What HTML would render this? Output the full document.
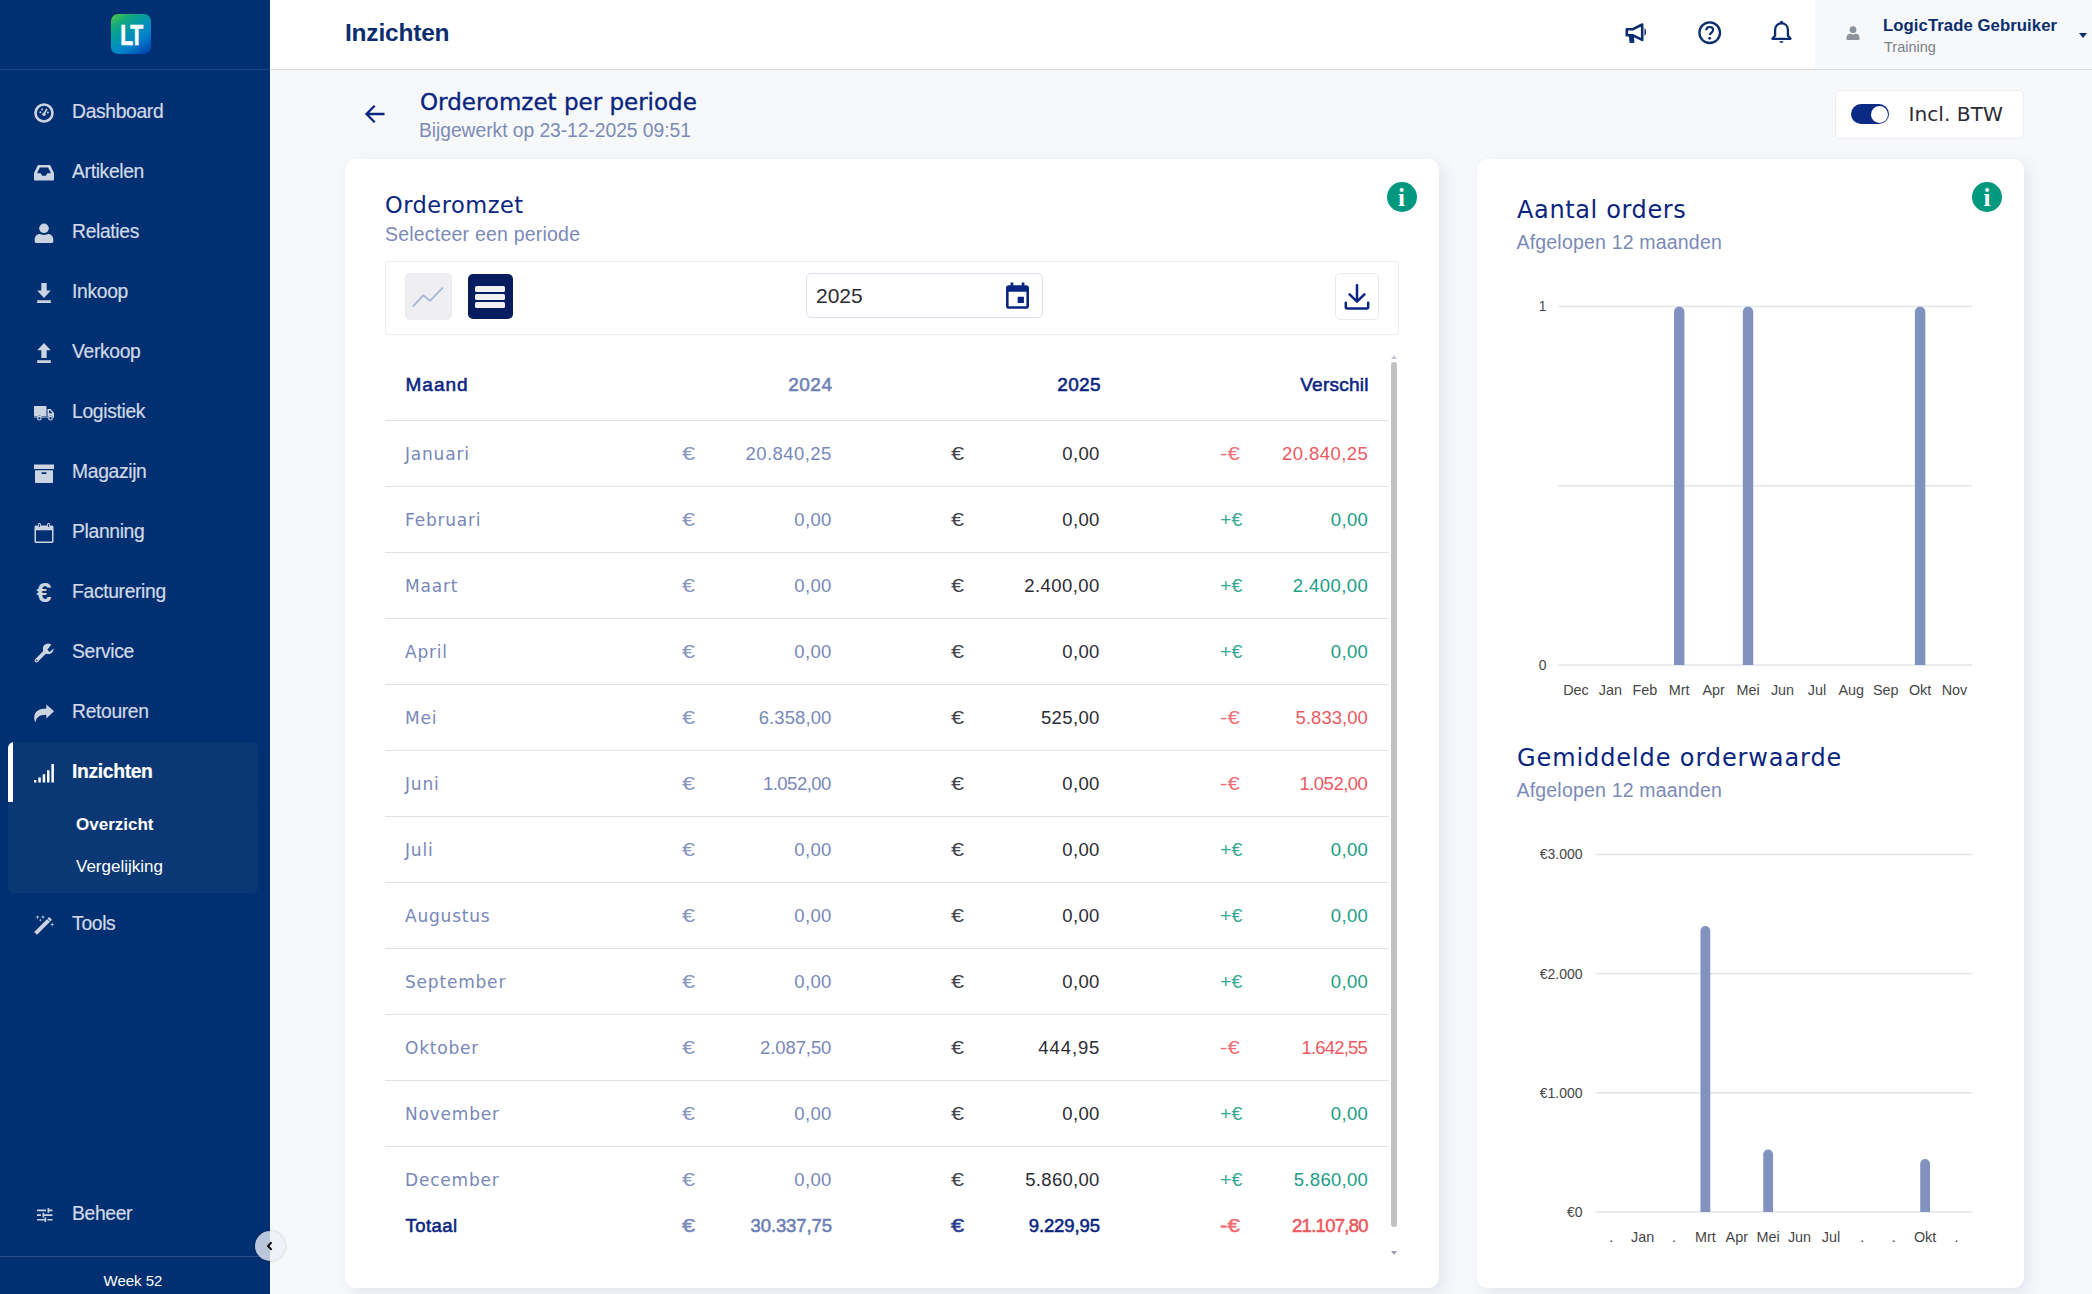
<!DOCTYPE html>
<html lang="nl">
<head>
<meta charset="utf-8">
<title>Inzichten - Orderomzet per periode</title>
<style>
*{box-sizing:border-box;margin:0;padding:0}
html,body{width:2092px;height:1294px;overflow:hidden}
body{position:relative;background:#f7f8fa;font-family:"Liberation Sans",sans-serif;color:#0a2580}
.abs{position:absolute}
.t{position:absolute;white-space:nowrap;line-height:1}
/* ---------- sidebar ---------- */
#side{position:absolute;left:0;top:0;width:270px;height:1294px;background:#003072}
#side .logo{position:absolute;left:111px;top:14px;width:40px;height:40px;border-radius:7px;background:linear-gradient(145deg,#58c640 0%,#12a97c 22%,#0093b6 48%,#0080cc 68%,#0038a4 100%);}
#side .logo span{position:absolute;left:0;top:3px;width:40px;text-align:center;font-weight:bold;font-size:30px;line-height:35px;color:#fff;letter-spacing:-2px;transform:scaleX(.7);-webkit-text-stroke:.7px #fff}
#side .hl{position:absolute;left:0;top:69px;width:270px;height:1px;background:#1c4581}
#side .fl{position:absolute;left:0;top:1256px;width:270px;height:1px;background:#2a4f88}
.nav{-webkit-text-stroke:.2px currentColor;position:absolute;left:72.100px;font-size:19.3px;line-height:22px;height:22px;color:#d3d9e6;white-space:nowrap;letter-spacing:-.35px;margin-top:1px}
.nav.on{color:#fff;font-weight:bold}
.sub{position:absolute;left:76px;font-size:17px;line-height:20px;color:#fff;white-space:nowrap}
.ico{position:absolute;left:32px;width:24px;height:24px}
.ico svg{display:block;width:24px;height:24px}
#actbox{position:absolute;left:8px;top:742px;width:250px;height:151px;border-radius:6px;background:#0b3875;overflow:hidden}
#actbox .bar{position:absolute;left:0;top:0;width:5px;height:60px;background:#fff}
#actbox .div{position:absolute;left:0;top:60px;width:250px;height:1px;background:#0a3470}
#collapse{position:absolute;left:255px;top:1231px;width:30px;height:30px;border-radius:15px;background:rgba(236,240,247,.78);box-shadow:0 0 3px rgba(0,0,0,.25)}
/* ---------- header ---------- */
#head{position:absolute;left:270px;top:0;width:1822px;height:69px;background:#fff}
#headline{position:absolute;left:270px;top:69px;width:1822px;height:1px;background:#dbdbdc}
#user{position:absolute;left:1815px;top:0;width:277px;height:69px;background:#f7f8fa}
/* ---------- cards ---------- */
.card{position:absolute;background:#fff;border-radius:11px;box-shadow:5px 5px 14px rgba(60,80,150,.10)}
.mont{font-family:"DejaVu Sans","Liberation Sans",sans-serif}
.th{font-family:"Liberation Sans",sans-serif!important;font-size:19px;line-height:24px;font-weight:normal;-webkit-text-stroke:.55px currentColor;letter-spacing:.7px}
.td{font-size:18.500px;line-height:22px}
.td.n{letter-spacing:.4px;margin-right:.2px}
.td.e{transform-origin:0 50%;transform:scaleX(1.27);opacity:.88}
.td.e.sg{transform:scaleX(1.06)}
.td.e.sg.mn{transform:scaleX(1.2)}
.td.n.tot{letter-spacing:-.1px;margin-right:.1px}
.td.m{font-family:"DejaVu Sans","Liberation Sans",sans-serif;font-size:17px;letter-spacing:.8px}
.td.tot{font-weight:normal;-webkit-text-stroke:.55px currentColor}
.td.m.tot{font-family:"Liberation Sans",sans-serif;font-size:18.500px;letter-spacing:.45px;margin-left:.5px}
</style>
</head>
<body>
<div id="side">
<div class="logo"><span>LT</span></div>
<div class="hl"></div>
<div id="actbox"><div class="bar"></div><div class="div"></div></div>
<div class="nav" id="n0" style="top:100px">Dashboard</div>
<div class="nav" id="n1" style="top:160px">Artikelen</div>
<div class="nav" id="n2" style="top:220px">Relaties</div>
<div class="nav" id="n3" style="top:280px">Inkoop</div>
<div class="nav" id="n4" style="top:340px">Verkoop</div>
<div class="nav" id="n5" style="top:400px">Logistiek</div>
<div class="nav" id="n6" style="top:460px">Magazijn</div>
<div class="nav" id="n7" style="top:520px">Planning</div>
<div class="nav" id="n8" style="top:580px">Facturering</div>
<div class="nav" id="n9" style="top:640px">Service</div>
<div class="nav" id="n10" style="top:700px">Retouren</div>
<div class="nav on" id="n11" style="top:760px">Inzichten</div>
<div class="sub" id="s0" style="top:815px;font-weight:bold">Overzicht</div>
<div class="sub" id="s1" style="top:857px">Vergelijking</div>
<div class="nav" id="n12" style="top:912px">Tools</div>
<div class="nav" id="n13" style="top:1202px">Beheer</div>
<div class="abs" style="left:34px;top:102.7px;width:20px;height:20px"><svg viewBox="0 0 20 20" width="20" height="20" style="display:block;overflow:visible"><circle cx="10" cy="10" r="8.5" fill="none" stroke="#cdd4e1" stroke-width="2.6"/><path d="M9.6 11.6 L12.6 6.4" stroke="#cdd4e1" stroke-width="1.7" stroke-linecap="round"/><circle cx="10" cy="11.3" r="1.7" fill="#cdd4e1"/><circle cx="6.3" cy="9.2" r="1" fill="#cdd4e1"/><circle cx="8.2" cy="6.6" r="1" fill="#cdd4e1"/><circle cx="13.9" cy="9.4" r="1" fill="#cdd4e1"/></svg></div>
<div class="abs" style="left:34px;top:162.8px;width:20px;height:20px"><svg viewBox="0 0 20 20" width="20" height="20" style="display:block;overflow:visible"><path fill-rule="evenodd" fill="#cdd4e1" d="M4.6 2h10.8c.5 0 .9.3 1.1.7L20 10v6.5c0 .6-.4 1-1 1H1c-.6 0-1-.4-1-1V10l3.500-7.300c.2-.4.6-.7 1.100-.7zM5.900 4.600 3.100 10.200H6.800l1.300 2.600h3.800l1.300-2.600h3.700L14.100 4.600z"/></svg></div>
<div class="abs" style="left:34px;top:223.0px;width:20px;height:20px"><svg viewBox="0 0 20 20" width="20" height="20" style="display:block;overflow:visible"><circle cx="10" cy="5.300" r="4.800" fill="#cdd4e1"/><path fill="#cdd4e1" d="M.7 18.600v-2.100c0-3.200 2.400-5.400 5.300-5.400.9 0 1.900.900 4 .900s3.100-.900 4-.900c2.900 0 5.300 2.200 5.300 5.400v2.100c0 .8-.6 1.400-1.400 1.400H2.100c-.8 0-1.400-.6-1.400-1.400z"/></svg></div>
<div class="abs" style="left:34px;top:283.0px;width:20px;height:20px"><svg viewBox="0 0 20 20" width="20" height="20" style="display:block;overflow:visible"><path fill="#cdd4e1" d="M7.300 0h5.400v7.600h4.100L10 14.900 3.200 7.600h4.100zM3.200 17.300h13.600V20H3.200z"/></svg></div>
<div class="abs" style="left:34px;top:343.4px;width:20px;height:20px"><svg viewBox="0 0 20 20" width="20" height="20" style="display:block;overflow:visible"><path fill="#cdd4e1" d="M10 0l6.800 7.300h-4.100v7.600H7.300V7.300H3.200zM3.200 17.300h13.600V20H3.200z"/></svg></div>
<div class="abs" style="left:34px;top:405.6px;width:20px;height:14px"><svg viewBox="0 0 20 14" width="20" height="14" style="display:block;overflow:visible"><path fill="#cdd4e1" d="M.8 0h10.900c.5 0 .8.300.8.800V10.500H0V.8C0 .3.300 0 .8 0zM13.500 3h3.100l3.400 3.900v4.800h-.9a2.600 2.600 0 0 0-5.100 0H8a2.600 2.600 0 0 0-5.100 0H0V11.300h13.500zM15 4.500v2.700h3.400L16.100 4.500z"/><circle cx="5.400" cy="12.200" r="1.800" fill="none" stroke="#cdd4e1" stroke-width="1.200"/><circle cx="16.500" cy="12.200" r="1.800" fill="none" stroke="#cdd4e1" stroke-width="1.200"/></svg></div>
<div class="abs" style="left:34px;top:463.5px;width:20px;height:19px"><svg viewBox="0 0 20 19" width="20" height="19" style="display:block;overflow:visible"><path fill-rule="evenodd" fill="#cdd4e1" d="M0 .6h20v4.300H0zM1 6.200h18v12c0 .4-.3.700-.7.700H1.700c-.4 0-.7-.3-.7-.7zM7.600 8.300v1.600h4.800V8.300z"/></svg></div>
<div class="abs" style="left:34px;top:523.0px;width:20px;height:20px"><svg viewBox="0 0 20 20" width="20" height="20" style="display:block;overflow:visible"><path fill-rule="evenodd" fill="#cdd4e1" d="M2 2.400h2.100V1.100c0-.6.500-1.100 1.100-1.100h.5c.6 0 1.100.5 1.100 1.100v1.300h6.400V1.100c0-.6.500-1.100 1.100-1.100h.5c.6 0 1.100.5 1.100 1.100v1.300H18c.9 0 1.500.7 1.500 1.500v14.600c0 .8-.6 1.500-1.500 1.500H2c-.9 0-1.500-.7-1.500-1.500V3.900C.5 3.100 1.100 2.400 2 2.400zM2 7.300v11.200h16V7.300zM4.900 1.100v2.800h1V1.100zm9.200 0v2.800h1V1.100z"/></svg></div>
<div class="abs" style="left:35px;top:578px;width:18px;height:30px;font:bold 27px/30px 'Liberation Sans',sans-serif;color:#cdd4e1;text-align:center">€</div>
<div class="abs" style="left:34px;top:643.0px;width:20px;height:20px"><svg viewBox="0 0 20 20" width="20" height="20" style="display:block;overflow:visible"><path d="M11.800 8.200 2.500 17.500" stroke="#cdd4e1" stroke-width="3.800" stroke-linecap="round" fill="none"/><circle cx="14.200" cy="5.800" r="5.400" fill="#cdd4e1"/><path d="M13.300 6.700 19 -.6 22.500 3 15.600 9z" fill="#003072"/><circle cx="2.700" cy="17.300" r=".8" fill="#003072"/></svg></div>
<div class="abs" style="left:34px;top:703.5px;width:20px;height:19px"><svg viewBox="0 0 20 19" width="20" height="19" style="display:block;overflow:visible"><path fill="#cdd4e1" d="M20 7.300 12.300 .6v3.900C5.200 4.600 .2 7 .2 14c0 1.700.5 3.300 1.300 4.300C2.300 13.200 5.300 10.800 12.300 10.700v3.700z"/></svg></div>
<div class="abs" style="left:34px;top:763.8px;width:20px;height:18.4px"><svg viewBox="0 0 20 18.4" width="20" height="18.4" style="display:block;overflow:visible"><path fill="#fff" d="M0 16h2.400v2.400H0zM4.300 13.600h2.500v4.800H4.300zM8.700 10.200h2.500v8.200H8.700zM13 6.200h2.500v12.200H13zM17.400 0h2.500v18.400h-2.500z"/></svg></div>
<div class="abs" style="left:34px;top:914.75px;width:20.5px;height:20.5px"><svg viewBox="0 0 20.500 20.500" width="20.5" height="20.5" style="display:block;overflow:visible"><path d="M1.600 18.400 16.600 3.400" stroke="#cdd4e1" stroke-width="4" fill="none"/><path d="M13.300 3.900 16.100 6.700" stroke="#003072" stroke-width=".9"/><path fill="#cdd4e1" d="M3.500 0l.5 1.600 1.600.5-1.600.5-.5 1.600-.5-1.600L1.400 2.100 3 1.600zM9 0l.5 1.600 1.600.5-1.600.5L9 4.200l-.5-1.600-1.600-.5 1.600-.5zM18.200 7.500l.5 1.600 1.600.5-1.600.5-.5 1.600-.5-1.600-1.600-.5 1.600-.5zM6.300 3.600l.4 1.200 1.200.4-1.200.4-.4 1.200-.4-1.200-1.200-.4 1.200-.4z"/></svg></div>
<div class="abs" style="left:36.5px;top:1207.95px;width:15.5px;height:14.1px"><svg viewBox="0 0 15.500 14.100" width="15.5" height="14.1" style="display:block;overflow:visible"><path fill="#cdd4e1" d="M0 1.500h9v1.700H0zM12 1.500h3.500v1.700H12zM10.500 0h1.700v4.700h-1.700zM0 6.200h4v1.700H0zM7 6.200h8.500v1.700H7zM5.500 4.700h1.700v4.700H5.500zM0 10.900h7.500v1.700H0zM10.500 10.900h5v1.700h-5zM7.500 9.400h1.700v4.700H7.500z"/></svg></div>
<div class="fl"></div>
<div class="t" id="week" style="left:73px;top:1272px;width:120px;text-align:center;font-size:15px;line-height:18px;color:#fff">Week 52</div>
</div>
<div id="collapse"><svg viewBox="0 0 30 30" width="30" height="30"><path d="M16.600 11.300 13 15l3.600 3.700" fill="none" stroke="#111" stroke-width="2"/></svg></div>
<div id="head"></div><div id="user"></div><div id="headline"></div>
<div class="t" id="htitle" style="left:345px;top:19px;font-size:24.5px;line-height:28px;font-weight:bold;color:#0a2d6e;letter-spacing:-.2px">Inzichten</div>
<div class="abs" style="left:1625px;top:22px;width:24px;height:22px"><svg viewBox="0 0 24 22" width="24" height="22" style="display:block"><path fill="none" stroke="#0a2d6e" stroke-width="2.600" stroke-linejoin="round" d="M1.800 7.300h5.700l9.700-4.800v15.400L7.500 13.200H1.800z"/><path fill="#0a2d6e" d="M3.800 13h5l.6 6.800c0 .7-.5 1.200-1.200 1.200H5.600c-.7 0-1.200-.5-1.200-1.200zM19.500 6.300c2.200 1 2.200 6.500 0 7.600z"/></svg></div>
<div class="abs" style="left:1698px;top:20.500px;width:24px;height:24px"><svg viewBox="0 0 24 24" width="24" height="24" style="display:block"><circle cx="11.700" cy="11.700" r="10.300" fill="none" stroke="#0a2d6e" stroke-width="2.300"/><path d="M8.300 9.300c0-2 1.500-3.300 3.400-3.300s3.400 1.300 3.400 3.100c0 2.300-3.300 2.600-3.300 5" fill="none" stroke="#0a2d6e" stroke-width="2.200"/><circle cx="11.700" cy="17.300" r="1.400" fill="#0a2d6e"/></svg></div>
<div class="abs" style="left:1770px;top:20px;width:23px;height:25px"><svg viewBox="0 0 23 25" width="23" height="25" style="display:block"><path d="M11.500 3.300c-3.800 0-6.400 2.900-6.400 6.600v5.600l-2.600 3.300h18l-2.600-3.300V9.900c0-3.700-2.600-6.600-6.400-6.600z" fill="none" stroke="#0a2d6e" stroke-width="2.300" stroke-linejoin="round"/><circle cx="11.500" cy="2.300" r="1.600" fill="#0a2d6e"/><path d="M9.300 21.300a2.300 2.300 0 0 0 4.400 0z" fill="#0a2d6e"/></svg></div>
<div class="abs" style="left:1846px;top:26px;width:14px;height:14px"><svg viewBox="0 0 20 20" width="14" height="14" style="display:block"><circle cx="10" cy="5.300" r="4.800" fill="#8d939c"/><path fill="#8d939c" d="M.7 18.600v-2.100c0-3.200 2.400-5.400 5.300-5.400.9 0 1.900.900 4 .900s3.100-.900 4-.900c2.900 0 5.300 2.200 5.300 5.400v2.100c0 .8-.6 1.400-1.400 1.400H2.100c-.8 0-1.400-.6-1.400-1.400z"/></svg></div>
<div class="t" id="uname" style="left:1883px;top:16px;letter-spacing:.08px;font-size:16.700px;line-height:20px;font-weight:bold;color:#0a2d6e">LogicTrade Gebruiker</div>
<div class="t" id="utrain" style="left:1884px;top:38px;font-size:14.500px;line-height:18px;color:#7a7f88">Training</div>
<div class="abs" style="left:2078.500px;top:33px;width:0;height:0;border-left:4px solid transparent;border-right:4px solid transparent;border-top:5.500px solid #0a2d6e"></div>
<div class="abs" style="left:364px;top:103px;width:22px;height:22px"><svg viewBox="0 0 22 22" width="22" height="22" style="display:block"><path d="M20.500 11H3.300M10.700 2.800 2.500 11l8.200 8.200" fill="none" stroke="#0a2580" stroke-width="2.300"/></svg></div>
<div class="t mont" id="ptitle" style="left:420px;top:88px;font-size:23px;line-height:28px;color:#0a2580;font-weight:normal;-webkit-text-stroke:.35px #0a2580">Orderomzet per periode</div>
<div class="t" id="psub" style="left:419px;top:120px;letter-spacing:-.05px;font-size:19.300px;line-height:22px;color:#7c8ab7">Bijgewerkt op 23-12-2025 09:51</div>
<div class="abs" style="left:1835px;top:90px;width:189px;height:49px;background:#fff;border:1px solid #eceef3;border-radius:5px"></div>
<div class="abs" style="left:1851px;top:104px;width:38px;height:20px;border-radius:10px;background:#0a2a86"><div class="abs" style="left:19.500px;top:1.500px;width:17px;height:17px;border-radius:9px;background:#fff"></div></div>
<div class="t mont" id="btw" style="left:1908.500px;top:101px;font-size:20.200px;line-height:26px;color:#2c2c34">Incl. BTW</div>
<div class="card" style="left:345px;top:159px;width:1094px;height:1129px"></div>
<div class="t mont" id="c1title" style="left:385px;top:191px;letter-spacing:.5px;font-size:22.500px;line-height:28px;color:#0a2580">Orderomzet</div>
<div class="t" id="c1sub" style="left:385px;top:223px;letter-spacing:.21px;font-size:19.500px;line-height:22px;color:#7c8ab7">Selecteer een periode</div>
<div class="abs" style="left:1386.5px;top:182px;width:30px;height:30px;border-radius:15px;background:#019880;color:#fff;text-align:center;font:bold 25px/31px 'Liberation Serif',serif">i</div>
<div class="abs" style="left:385px;top:261px;width:1014px;height:74px;border:1px solid #eceef4;border-radius:4px"></div>
<div class="abs" style="left:405px;top:273px;width:47px;height:47px;border-radius:5px;background:#efeff1;border:1px solid #ebecf3"><svg viewBox="0 0 47 47" width="47" height="47" style="display:block;margin:-1px"><path d="M8.400 32.800 18.100 22.300 25 27.800 37.300 15.200" fill="none" stroke="#a9b5d7" stroke-width="1.800" stroke-linecap="round" stroke-linejoin="round"/></svg></div>
<div class="abs" style="left:468px;top:274px;width:45px;height:45px;border-radius:5px;background:#061c5e"><div class="abs" style="left:7px;top:11.800px;width:30px;height:6.200px;border-radius:1.500px;background:#f0f1f5"></div><div class="abs" style="left:7px;top:19.900px;width:30px;height:6.200px;border-radius:1.500px;background:#f0f1f5"></div><div class="abs" style="left:7px;top:28px;width:30px;height:6.200px;border-radius:1.500px;background:#f0f1f5"></div></div>
<div class="abs" style="left:806px;top:273px;width:237px;height:45px;border:1px solid #dde1ee;border-radius:5px;background:#fff"></div>
<div class="t" id="yr" style="left:816px;top:283px;font-size:21px;line-height:26px;color:#2c2c34">2025</div>
<div class="abs" style="left:1006px;top:282px;width:23px;height:27px"><svg viewBox="0 0 23 27" width="23" height="27" style="display:block"><path fill-rule="evenodd" fill="#0a2580" d="M2.600 3.200H4.600V.6h2.700v2.600h8.400V.6h2.700v2.600h2c1.400 0 2.600 1.200 2.600 2.600v18.400c0 1.400-1.200 2.600-2.600 2.600H2.600C1.200 26.800 0 25.600 0 24.200V5.800C0 4.400 1.200 3.200 2.600 3.200zM2.600 9.800v14.400h17.800V9.800zM11.700 14.800h6.200v6.200h-6.200z"/></svg></div>
<div class="abs" style="left:1335px;top:273px;width:44px;height:47px;border:1px solid #e6e9f2;border-radius:5px;background:#fff"></div>
<div class="abs" style="left:1344px;top:284px;width:26px;height:26px"><svg viewBox="0 0 26 26" width="26" height="26" style="display:block"><path d="M13 1.200v16M5.600 10.300 13 17.600l7.400-7.300M1.800 18.800v4.200c0 .8.600 1.400 1.400 1.400h19.600c.8 0 1.400-.6 1.400-1.400v-4.200" fill="none" stroke="#0a2580" stroke-width="2.500" stroke-linecap="round" stroke-linejoin="round"/></svg></div>
<div class="t mont th" id="thm" style="letter-spacing:1px;left:405.500px;top:373px;color:#0a2580">Maand</div>
<div class="t mont th r" id="th24" style="letter-spacing:.5px;margin-right:-.5px;right:1260px;top:373px;color:#6d7fb6">2024</div>
<div class="t mont th r" id="th25" style="letter-spacing:.3px;margin-right:-.3px;right:991.5px;top:373px;color:#0a2580">2025</div>
<div class="t mont th r" id="thv" style="letter-spacing:.25px;margin-right:-.25px;right:723.5px;top:373px;color:#0a2580">Verschil</div>
<div class="abs" style="left:385px;top:420px;width:1004px;height:1px;background:#dfe1e6"></div>
<div class="t td m " style="left:405px;top:443px;color:#7888b8">Januari</div><div class="t td e " style="left:682px;top:443px;color:#7888b8">€</div><div class="t td n " style="right:1260px;top:443px;color:#7888b8;letter-spacing:0.46px;margin-right:0.14px">20.840,25</div><div class="t td e " style="left:951px;top:443px;color:#2c2c34">€</div><div class="t td n " style="right:992px;top:443px;color:#2c2c34">0,00</div><div class="t td e sg mn" style="left:1219.500px;top:443px;color:#ec5961">-€</div><div class="t td n " style="right:723.5px;top:443px;color:#ec5961;letter-spacing:0.46px;margin-right:0.14px">20.840,25</div>
<div class="abs" style="left:385px;top:486px;width:1004px;height:1px;background:#dfe1e6"></div>
<div class="t td m " style="left:405px;top:509px;color:#7888b8">Februari</div><div class="t td e " style="left:682px;top:509px;color:#7888b8">€</div><div class="t td n " style="right:1260px;top:509px;color:#7888b8">0,00</div><div class="t td e " style="left:951px;top:509px;color:#2c2c34">€</div><div class="t td n " style="right:992px;top:509px;color:#2c2c34">0,00</div><div class="t td e sg" style="left:1219.500px;top:509px;color:#1a9e86">+€</div><div class="t td n " style="right:723.5px;top:509px;color:#1a9e86">0,00</div>
<div class="abs" style="left:385px;top:552px;width:1004px;height:1px;background:#dfe1e6"></div>
<div class="t td m " style="left:405px;top:575px;color:#7888b8">Maart</div><div class="t td e " style="left:682px;top:575px;color:#7888b8">€</div><div class="t td n " style="right:1260px;top:575px;color:#7888b8">0,00</div><div class="t td e " style="left:951px;top:575px;color:#2c2c34">€</div><div class="t td n " style="right:992px;top:575px;color:#2c2c34;letter-spacing:0.45px;margin-right:0.15px">2.400,00</div><div class="t td e sg" style="left:1219.500px;top:575px;color:#1a9e86">+€</div><div class="t td n " style="right:723.5px;top:575px;color:#1a9e86;letter-spacing:0.45px;margin-right:0.15px">2.400,00</div>
<div class="abs" style="left:385px;top:618px;width:1004px;height:1px;background:#dfe1e6"></div>
<div class="t td m " style="left:405px;top:641px;color:#7888b8">April</div><div class="t td e " style="left:682px;top:641px;color:#7888b8">€</div><div class="t td n " style="right:1260px;top:641px;color:#7888b8">0,00</div><div class="t td e " style="left:951px;top:641px;color:#2c2c34">€</div><div class="t td n " style="right:992px;top:641px;color:#2c2c34">0,00</div><div class="t td e sg" style="left:1219.500px;top:641px;color:#1a9e86">+€</div><div class="t td n " style="right:723.5px;top:641px;color:#1a9e86">0,00</div>
<div class="abs" style="left:385px;top:684px;width:1004px;height:1px;background:#dfe1e6"></div>
<div class="t td m " style="left:405px;top:707px;color:#7888b8">Mei</div><div class="t td e " style="left:682px;top:707px;color:#7888b8">€</div><div class="t td n " style="right:1260px;top:707px;color:#7888b8;letter-spacing:0.1px;margin-right:0.50px">6.358,00</div><div class="t td e " style="left:951px;top:707px;color:#2c2c34">€</div><div class="t td n " style="right:992px;top:707px;color:#2c2c34;letter-spacing:0.38px;margin-right:0.22px">525,00</div><div class="t td e sg mn" style="left:1219.500px;top:707px;color:#ec5961">-€</div><div class="t td n " style="right:723.5px;top:707px;color:#ec5961;letter-spacing:0.04px;margin-right:0.56px">5.833,00</div>
<div class="abs" style="left:385px;top:750px;width:1004px;height:1px;background:#dfe1e6"></div>
<div class="t td m " style="left:405px;top:773px;color:#7888b8">Juni</div><div class="t td e " style="left:682px;top:773px;color:#7888b8">€</div><div class="t td n " style="right:1260px;top:773px;color:#7888b8;letter-spacing:-0.5px;margin-right:1.10px">1.052,00</div><div class="t td e " style="left:951px;top:773px;color:#2c2c34">€</div><div class="t td n " style="right:992px;top:773px;color:#2c2c34">0,00</div><div class="t td e sg mn" style="left:1219.500px;top:773px;color:#ec5961">-€</div><div class="t td n " style="right:723.5px;top:773px;color:#ec5961;letter-spacing:-0.5px;margin-right:1.10px">1.052,00</div>
<div class="abs" style="left:385px;top:816px;width:1004px;height:1px;background:#dfe1e6"></div>
<div class="t td m " style="left:405px;top:839px;color:#7888b8">Juli</div><div class="t td e " style="left:682px;top:839px;color:#7888b8">€</div><div class="t td n " style="right:1260px;top:839px;color:#7888b8">0,00</div><div class="t td e " style="left:951px;top:839px;color:#2c2c34">€</div><div class="t td n " style="right:992px;top:839px;color:#2c2c34">0,00</div><div class="t td e sg" style="left:1219.500px;top:839px;color:#1a9e86">+€</div><div class="t td n " style="right:723.5px;top:839px;color:#1a9e86">0,00</div>
<div class="abs" style="left:385px;top:882px;width:1004px;height:1px;background:#dfe1e6"></div>
<div class="t td m " style="left:405px;top:905px;color:#7888b8">Augustus</div><div class="t td e " style="left:682px;top:905px;color:#7888b8">€</div><div class="t td n " style="right:1260px;top:905px;color:#7888b8">0,00</div><div class="t td e " style="left:951px;top:905px;color:#2c2c34">€</div><div class="t td n " style="right:992px;top:905px;color:#2c2c34">0,00</div><div class="t td e sg" style="left:1219.500px;top:905px;color:#1a9e86">+€</div><div class="t td n " style="right:723.5px;top:905px;color:#1a9e86">0,00</div>
<div class="abs" style="left:385px;top:948px;width:1004px;height:1px;background:#dfe1e6"></div>
<div class="t td m " style="left:405px;top:971px;color:#7888b8">September</div><div class="t td e " style="left:682px;top:971px;color:#7888b8">€</div><div class="t td n " style="right:1260px;top:971px;color:#7888b8">0,00</div><div class="t td e " style="left:951px;top:971px;color:#2c2c34">€</div><div class="t td n " style="right:992px;top:971px;color:#2c2c34">0,00</div><div class="t td e sg" style="left:1219.500px;top:971px;color:#1a9e86">+€</div><div class="t td n " style="right:723.5px;top:971px;color:#1a9e86">0,00</div>
<div class="abs" style="left:385px;top:1014px;width:1004px;height:1px;background:#dfe1e6"></div>
<div class="t td m " style="left:405px;top:1037px;color:#7888b8">Oktober</div><div class="t td e " style="left:682px;top:1037px;color:#7888b8">€</div><div class="t td n " style="right:1260px;top:1037px;color:#7888b8;letter-spacing:-0.09px;margin-right:0.69px">2.087,50</div><div class="t td e " style="left:951px;top:1037px;color:#2c2c34">€</div><div class="t td n " style="right:992px;top:1037px;color:#2c2c34;letter-spacing:0.9px;margin-right:-0.30px">444,95</div><div class="t td e sg mn" style="left:1219.500px;top:1037px;color:#ec5961">-€</div><div class="t td n " style="right:723.5px;top:1037px;color:#ec5961;letter-spacing:-0.8px;margin-right:1.40px">1.642,55</div>
<div class="abs" style="left:385px;top:1080px;width:1004px;height:1px;background:#dfe1e6"></div>
<div class="t td m " style="left:405px;top:1103px;color:#7888b8">November</div><div class="t td e " style="left:682px;top:1103px;color:#7888b8">€</div><div class="t td n " style="right:1260px;top:1103px;color:#7888b8">0,00</div><div class="t td e " style="left:951px;top:1103px;color:#2c2c34">€</div><div class="t td n " style="right:992px;top:1103px;color:#2c2c34">0,00</div><div class="t td e sg" style="left:1219.500px;top:1103px;color:#1a9e86">+€</div><div class="t td n " style="right:723.5px;top:1103px;color:#1a9e86">0,00</div>
<div class="abs" style="left:385px;top:1146px;width:1004px;height:1px;background:#dfe1e6"></div>
<div class="t td m " style="left:405px;top:1169px;color:#7888b8">December</div><div class="t td e " style="left:682px;top:1169px;color:#7888b8">€</div><div class="t td n " style="right:1260px;top:1169px;color:#7888b8">0,00</div><div class="t td e " style="left:951px;top:1169px;color:#2c2c34">€</div><div class="t td n " style="right:992px;top:1169px;color:#2c2c34;letter-spacing:0.3px;margin-right:0.30px">5.860,00</div><div class="t td e sg" style="left:1219.500px;top:1169px;color:#1a9e86">+€</div><div class="t td n " style="right:723.5px;top:1169px;color:#1a9e86;letter-spacing:0.3px;margin-right:0.30px">5.860,00</div>
<div class="t td m tot" style="left:405px;top:1215px;color:#0a2580">Totaal</div><div class="t td e tot" style="left:682px;top:1215px;color:#6d7fb6">€</div><div class="t td n tot" style="right:1260px;top:1215px;color:#6d7fb6">30.337,75</div><div class="t td e tot" style="left:951px;top:1215px;color:#0a2580">€</div><div class="t td n tot" style="right:992px;top:1215px;color:#0a2580">9.229,95</div><div class="t td e sg mn tot" style="left:1219.500px;top:1215px;color:#ec5961">-€</div><div class="t td n tot" style="right:723.5px;top:1215px;color:#ec5961;letter-spacing:-.73px;margin-right:.73px">21.107,80</div>
<div class="abs" style="left:1391px;top:362px;width:6px;height:865px;border-radius:3px;background:#c1c1c1"></div>
<div class="abs" style="left:1391px;top:354.500px;width:0;height:0;border-left:3px solid transparent;border-right:3px solid transparent;border-bottom:4px solid #c6cad6"></div>
<div class="abs" style="left:1391px;top:1250.500px;width:0;height:0;border-left:3px solid transparent;border-right:3px solid transparent;border-top:4px solid #9aa0ad"></div>
<div class="card" style="left:1477px;top:159px;width:547px;height:1129px"></div>
<div class="t mont" id="c2t1" style="left:1517px;top:195px;letter-spacing:.63px;font-size:24px;line-height:30px;color:#0a2580">Aantal orders</div>
<div class="t" id="c2s1" style="left:1516.500px;top:231px;letter-spacing:.19px;font-size:19.500px;line-height:22px;color:#7c8ab7">Afgelopen 12 maanden</div>
<div class="abs" style="left:1972px;top:182px;width:30px;height:30px;border-radius:15px;background:#019880;color:#fff;text-align:center;font:bold 25px/31px 'Liberation Serif',serif">i</div>
<div class="t mont" id="c2t2" style="left:1517px;top:743px;letter-spacing:.9px;font-size:24px;line-height:30px;color:#0a2580">Gemiddelde orderwaarde</div>
<div class="t" id="c2s2" style="left:1516.500px;top:779px;letter-spacing:.19px;font-size:19.500px;line-height:22px;color:#7c8ab7">Afgelopen 12 maanden</div>
<svg class="abs" style="left:1477px;top:159px" width="547" height="1129" viewBox="1477 159 547 1129" font-family="'Liberation Sans',sans-serif" fill="#464646"><rect x="1558.500" y="305.75" width="413.500" height="1.500" fill="#e4e5e9"/><rect x="1558.500" y="485.00" width="413.500" height="1.500" fill="#e4e5e9"/><rect x="1558.500" y="664.25" width="413.500" height="1.500" fill="#e4e5e9"/><path d="M1674.01 665.00V311.70a5.2 5.2 0 0 1 10.4 0V665.00z" fill="#8292bf"/><path d="M1742.84 665.00V311.70a5.2 5.2 0 0 1 10.4 0V665.00z" fill="#8292bf"/><path d="M1914.92 665.00V311.70a5.2 5.2 0 0 1 10.4 0V665.00z" fill="#8292bf"/><text x="1542.500" y="311.1" font-size="13.800" text-anchor="middle">1</text><text x="1542.500" y="669.6" font-size="13.800" text-anchor="middle">0</text><text x="1576.0" y="694.500" font-size="14.400" text-anchor="middle">Dec</text><text x="1610.4" y="694.500" font-size="14.400" text-anchor="middle">Jan</text><text x="1644.8" y="694.500" font-size="14.400" text-anchor="middle">Feb</text><text x="1679.2" y="694.500" font-size="14.400" text-anchor="middle">Mrt</text><text x="1713.6" y="694.500" font-size="14.400" text-anchor="middle">Apr</text><text x="1748.0" y="694.500" font-size="14.400" text-anchor="middle">Mei</text><text x="1782.5" y="694.500" font-size="14.400" text-anchor="middle">Jun</text><text x="1816.9" y="694.500" font-size="14.400" text-anchor="middle">Jul</text><text x="1851.3" y="694.500" font-size="14.400" text-anchor="middle">Aug</text><text x="1885.7" y="694.500" font-size="14.400" text-anchor="middle">Sep</text><text x="1920.1" y="694.500" font-size="14.400" text-anchor="middle">Okt</text><text x="1954.5" y="694.500" font-size="14.400" text-anchor="middle">Nov</text><rect x="1595.500" y="853.75" width="376.700" height="1.500" fill="#e4e5e9"/><text x="1582.500" y="859.3" font-size="14" text-anchor="end">€3.000</text><rect x="1595.500" y="972.92" width="376.700" height="1.500" fill="#e4e5e9"/><text x="1582.500" y="978.5" font-size="14" text-anchor="end">€2.000</text><rect x="1595.500" y="1092.08" width="376.700" height="1.500" fill="#e4e5e9"/><text x="1582.500" y="1097.6" font-size="14" text-anchor="end">€1.000</text><rect x="1595.500" y="1211.25" width="376.700" height="1.500" fill="#e4e5e9"/><text x="1582.500" y="1216.8" font-size="14" text-anchor="end">€0</text><path d="M1700.47 1212.00V930.90a4.9 4.9 0 0 1 9.8 0V1212.00z" fill="#8292bf"/><path d="M1763.25 1212.00V1154.34a4.9 4.9 0 0 1 9.8 0V1212.00z" fill="#8292bf"/><path d="M1920.21 1212.00V1163.88a4.9 4.9 0 0 1 9.8 0V1212.00z" fill="#8292bf"/><text x="1611.2" y="1242.200" font-size="14.400" text-anchor="middle">.</text><text x="1642.6" y="1242.200" font-size="14.400" text-anchor="middle">Jan</text><text x="1674.0" y="1242.200" font-size="14.400" text-anchor="middle">.</text><text x="1705.4" y="1242.200" font-size="14.400" text-anchor="middle">Mrt</text><text x="1736.8" y="1242.200" font-size="14.400" text-anchor="middle">Apr</text><text x="1768.2" y="1242.200" font-size="14.400" text-anchor="middle">Mei</text><text x="1799.5" y="1242.200" font-size="14.400" text-anchor="middle">Jun</text><text x="1830.9" y="1242.200" font-size="14.400" text-anchor="middle">Jul</text><text x="1862.3" y="1242.200" font-size="14.400" text-anchor="middle">.</text><text x="1893.7" y="1242.200" font-size="14.400" text-anchor="middle">.</text><text x="1925.1" y="1242.200" font-size="14.400" text-anchor="middle">Okt</text><text x="1956.5" y="1242.200" font-size="14.400" text-anchor="middle">.</text></svg>
</body>
</html>
